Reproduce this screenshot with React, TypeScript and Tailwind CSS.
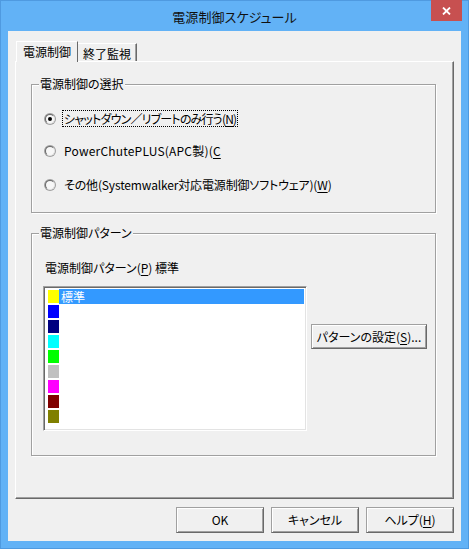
import React from "react";

const font = "font-['Noto_Sans_CJK_JP',sans-serif] [font-feature-settings:'palt']";

function Radio({ checked }: { checked?: boolean }) {
  return (
    <div className="relative w-[12px] h-[12px] rounded-full bg-[#a0a0a0] p-[1px] shrink-0">
      <div className="w-full h-full rounded-full bg-[#f7f7f7] border border-t-[#696969] border-l-[#696969] border-r-[#e3e3e3] border-b-[#e3e3e3] flex items-center justify-center">
        {checked && <div className="w-[4px] h-[4px] rounded-full bg-black" />}
      </div>
    </div>
  );
}

function Btn({ children, w = 88, h = 26 }: { children: React.ReactNode; w?: number; h?: number }) {
  return (
    <div
      className="flex items-center justify-center bg-[#f0f0f0] border border-t-[#a0a0a0] border-l-[#a0a0a0] border-r-[#696969] border-b-[#696969] shadow-[inset_1px_1px_0_#ffffff,inset_-1px_-1px_0_#a0a0a0] text-[12px] leading-[14px] text-black"
      style={{ width: w, height: h }}
    >
      {children}
    </div>
  );
}

const swatches = ["#ffff00", "#0000ff", "#000080", "#00ffff", "#00ff00", "#c0c0c0", "#ff00ff", "#800000", "#808000"];

export default function App() {
  return (
    <div className={`w-[469px] h-[549px] bg-[#62b2f6] border border-[#4f9ae0] flex flex-col ${font}`}>
      <div className="relative h-[30px] flex items-center justify-center">
        <span className="text-[13px] leading-[16px] text-[#111] pt-[1px] tracking-[0.1px]">電源制御スケジュール</span>
        <div className="absolute top-[-1px] right-[6px] w-[31px] h-[21px] bg-[#c75050] flex items-center justify-center">
          <svg width="9" height="8" viewBox="0 0 9 8">
            <path d="M1 0.5 L8 7.5 M8 0.5 L1 7.5" stroke="#ffffff" strokeWidth="1.8" />
          </svg>
        </div>
      </div>
      <div className="mx-[7px] h-[510px] bg-[#f0f0f0] pt-[10px] pl-[7px] flex flex-col">
        {/* tabs */}
        <div className="flex items-end h-[20px] ml-[1px] relative z-10">
          <div className="h-[21px] -mb-[1px] w-[62px] bg-[#f0f0f0] border-t border-l border-white border-r border-r-[#696969] flex items-center justify-center text-[12px] leading-[14px] text-black">
            電源制御
          </div>
          <div className="h-[18px] w-[59px] border-t border-white border-r border-r-[#696969] shadow-[inset_-1px_0_0_#a0a0a0] flex items-center justify-center text-[12px] leading-[14px] text-black pt-[2px]">
            終了監視
          </div>
        </div>
        {/* panel */}
        <div className="w-[439px] h-[438px] border-t border-l border-white border-r border-b border-r-[#696969] border-b-[#696969] shadow-[inset_-1px_-1px_0_#a0a0a0] pt-[22px] pl-[15px] text-[12px] leading-[14px] text-black">
          {/* group 1 */}
          <div className="relative w-[405px] h-[129px] border border-[#a0a0a0] shadow-[1px_1px_0_#ffffff,inset_1px_1px_0_#ffffff] pt-[25px] pl-[12px]">
            <div className="absolute top-[-8px] left-[7px] px-[1px] bg-[#f0f0f0]">電源制御の選択</div>
            <div className="flex items-center h-[17px]">
              <Radio checked />
              <div className="ml-[6px] px-[1px] h-[17px] flex items-center border border-dotted border-black tracking-[-0.8px]">
                シャットダウン／リブートのみ行う(<span className="underline underline-offset-2">N</span>)
              </div>
            </div>
            <div className="flex items-center h-[17px] mt-[15px]">
              <Radio />
              <div className="ml-[7px] px-[1px] tracking-[0.2px]">
                PowerChutePLUS(APC製)(<span className="underline underline-offset-2">C</span>
              </div>
            </div>
            <div className="flex items-center h-[17px] mt-[17px]">
              <Radio />
              <div className="ml-[7px] px-[1px] tracking-[-0.15px]">
                その他(Systemwalker対応電源制御ソフトウェア)(<span className="underline underline-offset-2">W</span>)
              </div>
            </div>
          </div>
          {/* group 2 */}
          <div className="relative mt-[20px] w-[405px] h-[223px] border border-[#a0a0a0] shadow-[1px_1px_0_#ffffff,inset_1px_1px_0_#ffffff] pt-[27px] pl-[11px]">
            <div className="absolute top-[-8px] left-[7px] px-[1px] bg-[#f0f0f0]">電源制御パターン</div>
            <div className="ml-[2px] h-[14px]">
              電源制御パターン(<span className="underline underline-offset-2">P</span>) 標準
            </div>
            <div className="flex items-start mt-[11px]">
              <div className="w-[264px] h-[145px] bg-white border border-t-[#a0a0a0] border-l-[#a0a0a0] border-r-[#ffffff] border-b-[#ffffff] shadow-[inset_1px_1px_0_#696969,inset_-1px_-1px_0_#e3e3e3] pt-[2px] pl-[2px] pr-[2px]">
                {swatches.map((c, i) => (
                  <div key={i} className="flex h-[15px]">
                    <div className="ml-[2px] mt-[1px] w-[11px] h-[13px]" style={{ backgroundColor: c }} />
                    {i === 0 ? (
                      <div className="flex-1 h-[15px] bg-[#3399ff] text-white pl-[2px] flex items-center">標準</div>
                    ) : null}
                  </div>
                ))}
              </div>
              <div className="ml-[4px] mt-[38px]">
                <Btn w={116} h={25}>
                  パターンの設定(<span className="underline underline-offset-2">S</span>)...
                </Btn>
              </div>
            </div>
          </div>
        </div>
        {/* buttons */}
        <div className="flex justify-end gap-[7px] pr-[7px] mt-[8px] text-black">
          <Btn>OK</Btn>
          <Btn>キャンセル</Btn>
          <Btn>
            ヘルプ(<span className="underline underline-offset-2">H</span>)
          </Btn>
        </div>
      </div>
    </div>
  );
}
